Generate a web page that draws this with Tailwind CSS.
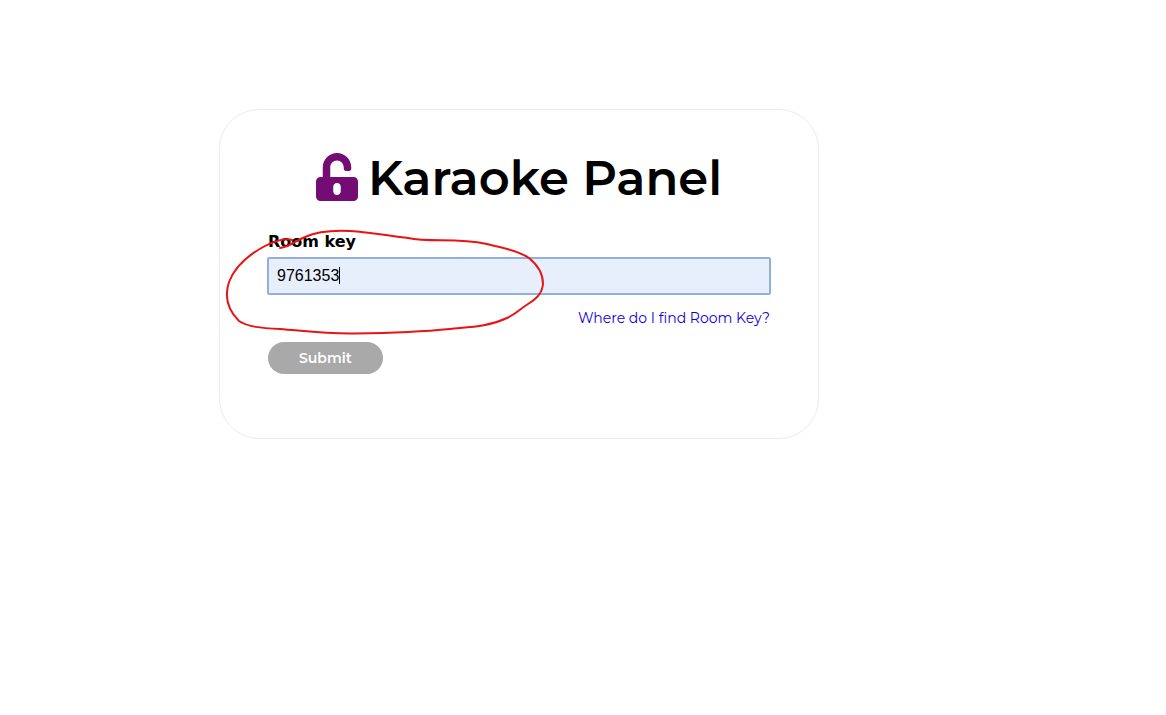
<!DOCTYPE html>
<html lang="en">
<head>
<meta charset="utf-8">
<meta name="viewport" content="width=device-width, initial-scale=1">
<title>Karaoke Panel</title>
<script src="https://cdn.jsdelivr.net/npm/@tailwindcss/browser@4"></script>
</head>
<body class="min-h-screen bg-white pt-[109px] lg:pr-32 font-['Montserrat','Inter',sans-serif] text-black">
<main class="relative mx-auto w-full max-w-[600px] rounded-[40px] border border-[#ececec] px-12 pt-10 pb-16">
  <h1 class="flex items-center justify-center gap-2.5 text-5xl leading-[56px] font-semibold whitespace-nowrap">
    <svg class="mb-0.5 h-12 w-[42px] shrink-0 fill-[#730d73]" viewBox="0 0 448 512" aria-hidden="true"><path d="M400 256H152V152.9c0-39.6 31.7-72.5 71.3-72.9 40-.4 72.7 32.1 72.7 72v16c0 13.3 10.7 24 24 24h32c13.3 0 24-10.7 24-24v-16C376 68 307.5-.3 223.5 0 139.5.3 72 69.5 72 153.5V256H48c-26.5 0-48 21.5-48 48v160c0 26.5 21.5 48 48 48h352c26.5 0 48-21.5 48-48V304c0-26.5-21.5-48-48-48zM264 408c0 22.1-17.9 40-40 40s-40-17.9-40-40v-48c0-22.1 17.9-40 40-40s40 17.9 40 40v48z"/></svg>
    <span>Karaoke Panel</span>
  </h1>
  <form class="mt-6">
    <label for="room-key" class="block font-['DejaVu_Sans',sans-serif] text-base leading-6 font-bold">Room key</label>
    <div class="relative -mx-px mt-[3px]">
      <input id="room-key" type="text" value="9761353" class="block h-[38px] w-full rounded-xs border-2 border-[#91b0dc] bg-[#e7effd] px-2 pb-px font-['Liberation_Sans',sans-serif] text-base outline-none">
      <span class="absolute top-[10px] left-[72px] h-[17px] w-px bg-black" aria-hidden="true"></span>
    </div>
    <div class="mt-[11px] text-right text-sm leading-6"><a href="#" class="text-[#1000dd]">Where do I find Room Key?</a></div>
    <button type="submit" class="mt-3 block h-8 rounded-full bg-[#a9a9a9] px-[31px] text-sm font-semibold text-white">Submit</button>
  </form>
  <svg class="pointer-events-none absolute top-[110px] left-0 h-[120px] w-[340px] fill-none stroke-[#e81414] stroke-2" viewBox="220 220 340 120" stroke-linecap="round" stroke-linejoin="round" aria-hidden="true"><path d="M292 240C285 238 274 241 265 246C248 255 235 266 229 282C224 297 228 310 239 321C248 327 261 328 280 329C305 331 325 334 355 333.500C390 333 430 331 450 329C470 327 488 327 507 318C516 314 520 309 528 304C536 299 542 294 543 284C543 275 539 266 529 258C519 251 507 249 495 246C482 242 470 241 455 240.500C438 240 422 241 408 238C390 236 370 232 350 231C330 230 316 232 305 237C297 240 290 247 280 248"/></svg>
</main>
</body>
</html>
